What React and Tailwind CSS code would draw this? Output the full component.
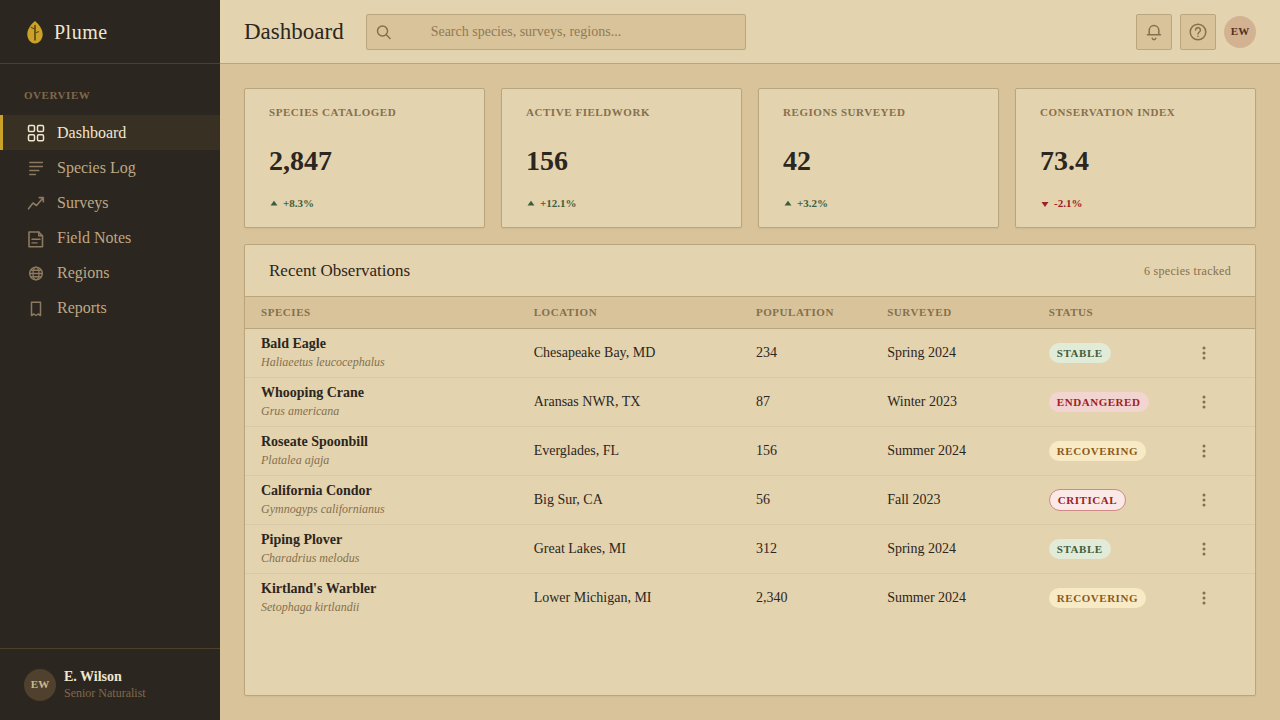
import React, { useState } from 'react';
import clsx from 'clsx';

const Icon = ({ children, className, size = 24 }) => (
  <svg
    width={size}
    height={size}
    viewBox={`0 0 ${size} ${size}`}
    fill="none"
    stroke="currentColor"
    strokeWidth="1.5"
    strokeLinecap="round"
    strokeLinejoin="round"
    aria-hidden="true"
    className={clsx('shrink-0', className)}
  >
    {children}
  </svg>
);

const navItems = [
  {
    label: 'Dashboard',
    icon: (
      <>
        <rect x="4.5" y="4.5" width="6" height="6" rx="1.2" />
        <rect x="13.5" y="4.5" width="6" height="6" rx="1.2" />
        <rect x="4.5" y="13.8" width="6" height="6" rx="1.2" />
        <rect x="13.5" y="13.8" width="6" height="6" rx="1.2" />
      </>
    ),
  },
  {
    label: 'Species Log',
    icon: <path d="M5.8 6.5h12.6M5.8 10.5h12.6M5.8 14.5h9M5.8 18.5h5.6" />,
  },
  {
    label: 'Surveys',
    icon: <path d="M4.5 17.8 9 12l3.5 2.5L19 7M15.2 6.6h4.1v4.2" strokeWidth="1.6" />,
  },
  {
    label: 'Field Notes',
    icon: (
      <>
        <path d="M5 6h9.7l3.8 3.8v11H5V6Z" strokeWidth="1.6" />
        <path d="M14.7 6v3.8h3.8M8 13.2h8M8 16.9h5" strokeWidth="1.4" />
      </>
    ),
  },
  {
    label: 'Regions',
    icon: (
      <>
        <circle cx="12" cy="12.5" r="6.3" />
        <ellipse cx="12" cy="12.5" rx="3" ry="6.3" strokeWidth="1.3" />
        <path d="M6 12.5h12M7 9.3h10M7 15.7h10" />
      </>
    ),
  },
  {
    label: 'Reports',
    icon: <path d="M7.5 6.2h9v13.3L14.2 18 12 19.5 9.8 18l-2.3 1.5V6.2Z" />,
  },
];

const stats = [
  { label: 'Species Cataloged', value: '2,847', change: '+8.3%', up: true },
  { label: 'Active Fieldwork', value: '156', change: '+12.1%', up: true },
  { label: 'Regions Surveyed', value: '42', change: '+3.2%', up: true },
  { label: 'Conservation Index', value: '73.4', change: '-2.1%', up: false },
];

const observations = [
  { name: 'Bald Eagle', latin: 'Haliaeetus leucocephalus', location: 'Chesapeake Bay, MD', population: '234', surveyed: 'Spring 2024', status: 'Stable' },
  { name: 'Whooping Crane', latin: 'Grus americana', location: 'Aransas NWR, TX', population: '87', surveyed: 'Winter 2023', status: 'Endangered' },
  { name: 'Roseate Spoonbill', latin: 'Platalea ajaja', location: 'Everglades, FL', population: '156', surveyed: 'Summer 2024', status: 'Recovering' },
  { name: 'California Condor', latin: 'Gymnogyps californianus', location: 'Big Sur, CA', population: '56', surveyed: 'Fall 2023', status: 'Critical' },
  { name: 'Piping Plover', latin: 'Charadrius melodus', location: 'Great Lakes, MI', population: '312', surveyed: 'Spring 2024', status: 'Stable' },
  { name: "Kirtland's Warbler", latin: 'Setophaga kirtlandii', location: 'Lower Michigan, MI', population: '2,340', surveyed: 'Summer 2024', status: 'Recovering' },
];

const statusStyles = {
  Stable: 'bg-[#e2ead8] text-[#3b5f3e]',
  Endangered: 'bg-[#f2d5d0] text-[#9b2226]',
  Recovering: 'bg-[#f8eac4] text-[#8b5a1e]',
  Critical: 'bg-[#fae9e6] text-[#9b2226] border border-[#d08a86]',
};

const Sidebar = ({ active, onSelect }) => (
  <aside className="flex w-[220px] shrink-0 flex-col bg-[#2c2620]">
    <div className="flex h-16 items-center gap-2 border-b border-[#4f3f2e] pl-6">
      <svg width="22" height="26" viewBox="0 0 22 26" aria-hidden="true">
        <path d="M11 2c3.6 3.2 7.7 7.6 7.7 13.2 0 5-3.3 9.2-7.7 9.2s-7.7-4.2-7.7-9.2C3.3 9.6 7.4 5.2 11 2Z" fill="#c9a227" />
        <path d="M11 6v15.5" stroke="#5f4b18" strokeWidth="1.7" />
        <path d="M11 10.2 7 8.2M11 14l4-1.5" stroke="#5f4b18" strokeWidth="1.2" />
      </svg>
      <span className="text-xl tracking-wide text-[#f0e6d0]">Plume</span>
    </div>
    <nav className="flex-1 pt-[23px]">
      <h2 className="mb-3 pl-6 text-[11px] leading-4 font-bold tracking-wider text-[#80694a] uppercase">Overview</h2>
      {navItems.map((item) => (
        <a
          key={item.label}
          href="#"
          onClick={() => onSelect(item.label)}
          className={clsx(
            'flex h-[35px] items-center gap-[9px] border-l-3 pl-[21px] text-base',
            active === item.label
              ? 'border-[#c9a227] bg-[#393024] text-[#f0e6d0]'
              : 'border-transparent text-[#bda885] hover:bg-[#393024]'
          )}
        >
          <Icon className={active === item.label ? 'text-[#f0e6d0]' : 'text-[#8b7a5f]'}>{item.icon}</Icon>
          {item.label}
        </a>
      ))}
    </nav>
    <div className="flex h-18 items-center gap-2 border-t border-[#4f3f2a] px-6">
      <span className="flex size-8 items-center justify-center rounded-full bg-[#4f412d] text-[11px] font-bold text-[#cdb88f]">EW</span>
      <div>
        <p className="text-sm leading-4 font-bold text-[#f0e6d0]">E. Wilson</p>
        <p className="text-xs leading-4 text-[#80694a]">Senior Naturalist</p>
      </div>
    </div>
  </aside>
);

const HeaderButton = ({ label, children }) => (
  <button
    aria-label={label}
    className="flex size-9 items-center justify-center rounded-[2px] border border-[#baa67e] bg-[#d9c39a] text-[#84704d]"
  >
    <Icon size={20}>{children}</Icon>
  </button>
);

const Header = ({ title }) => (
  <header className="flex h-16 shrink-0 items-center gap-[22px] border-b border-[#baa67e] bg-[#e4d3af] px-6">
    <h1 className="text-[23px] leading-8 text-[#2c2620]">{title}</h1>
    <div className="relative w-full max-w-[380px]">
      <Icon size={20} className="pointer-events-none absolute top-2 left-2 text-[#84704d]">
        <circle cx="8.5" cy="9" r="5" />
        <path d="m12.3 12.8 3.7 3.7" />
      </Icon>
      <input
        type="search"
        aria-label="Search"
        placeholder="Search species, surveys, regions..."
        className="h-9 w-full rounded-[2px] border border-[#baa67e] bg-[#d9c39a] pr-4 pl-16 text-sm text-[#2c2620] outline-none placeholder:text-[#8f7a55]"
      />
    </div>
    <div className="ml-auto flex items-center gap-2">
      <HeaderButton label="Notifications">
        <path d="M3.5 12.7h13M5.2 12.5V8.4a4.8 4.8 0 0 1 9.600 0v4.1M8.2 16.2c.4 2 3.2 2 3.6 0" />
      </HeaderButton>
      <HeaderButton label="Help">
        <circle cx="10" cy="10" r="7.8" />
        <path d="M7.6 8a2.4 2.4 0 1 1 3.8 2c-.9.6-1.400 1-1.400 1.900M10 14.300v.1" />
      </HeaderButton>
      <button className="flex size-8 items-center justify-center rounded-full bg-[#d3b291] text-[11px] font-bold text-[#54301f]">EW</button>
    </div>
  </header>
);

const StatCard = ({ stat }) => (
  <section className="rounded-[2px] border border-[#baa67e] bg-[#e4d3af] px-6 pt-[15px] pb-4 shadow-xs">
    <h2 className="text-[11px] leading-4 font-bold tracking-wider text-[#84704d] uppercase">{stat.label}</h2>
    <p className="mt-5 text-[28px] leading-[42px] font-semibold text-[#2c2620]">{stat.value}</p>
    <p className={clsx('mt-[13px] flex items-center gap-1 text-[11px] leading-4 font-bold', stat.up ? 'text-[#3b5f3e]' : 'text-[#9b2226]')}>
      <svg width="10" height="10" viewBox="0 0 10 10" fill="currentColor" aria-hidden="true">
        <path d={stat.up ? 'M5 2.8 8.5 7.5h-7Z' : 'M1.5 4h7L5 9Z'} />
      </svg>
      {stat.change}
    </p>
  </section>
);

const ObservationRow = ({ row }) => (
  <tr className="h-[49px] border-b border-[#d9c9a8] last:border-b-0">
    <td className="px-4">
      <p className="text-sm leading-[18px] font-bold">{row.name}</p>
      <p className="text-xs leading-[18px] text-[#84704d] italic">{row.latin}</p>
    </td>
    <td className="px-4">{row.location}</td>
    <td className="px-4">{row.population}</td>
    <td className="px-4">{row.surveyed}</td>
    <td className="px-4">
      <span className={clsx('inline-flex rounded-full px-2 py-0.5 text-[11px] leading-4 font-bold tracking-wider uppercase', statusStyles[row.status])}>
        {row.status}
      </span>
    </td>
    <td className="px-4">
      <button aria-label={`Actions for ${row.name}`} className="flex size-7 items-center justify-center text-[#84704d]">
        <svg width="16" height="16" viewBox="0 0 16 16" fill="currentColor" aria-hidden="true">
          <circle cx="8" cy="3" r="1.5" />
          <circle cx="8" cy="8" r="1.5" />
          <circle cx="8" cy="13" r="1.5" />
        </svg>
      </button>
    </td>
  </tr>
);

const Observations = () => (
  <section className="flex-1 rounded-[2px] border border-[#baa67e] bg-[#e4d3af] shadow-xs">
    <div className="flex h-[51px] items-center justify-between px-6">
      <h2 className="text-[17px] text-[#2c2620]">Recent Observations</h2>
      <span className="text-xs tracking-wide text-[#84704d]">6 species tracked</span>
    </div>
    <table className="w-full table-fixed text-left text-sm text-[#2c2620]">
      <thead>
        <tr className="h-8 border-y border-[#baa67e] bg-[#d9c39a] text-[11px] tracking-wider text-[#84704d] uppercase">
          <th className="w-[27%] px-4">Species</th>
          <th className="w-[22%] px-4">Location</th>
          <th className="w-[13%] px-4">Population</th>
          <th className="w-[16%] px-4">Surveyed</th>
          <th className="w-[14%] px-4">Status</th>
          <th className="w-[8%] px-4" aria-label="Actions" />
        </tr>
      </thead>
      <tbody>
        {observations.map((row) => (
          <ObservationRow key={row.name} row={row} />
        ))}
      </tbody>
    </table>
  </section>
);

const App = () => {
  const [active, setActive] = useState('Dashboard');

  return (
    <div className="flex min-h-screen bg-[#d9c39a] font-['Liberation_Serif',serif]">
      <Sidebar active={active} onSelect={setActive} />
      <div className="flex min-w-0 flex-1 flex-col">
        <Header title={active} />
        <main className="flex flex-1 flex-col gap-4 p-6">
          <div className="grid grid-cols-4 gap-4">
            {stats.map((stat) => (
              <StatCard key={stat.label} stat={stat} />
            ))}
          </div>
          <Observations />
        </main>
      </div>
    </div>
  );
};

export default App;
